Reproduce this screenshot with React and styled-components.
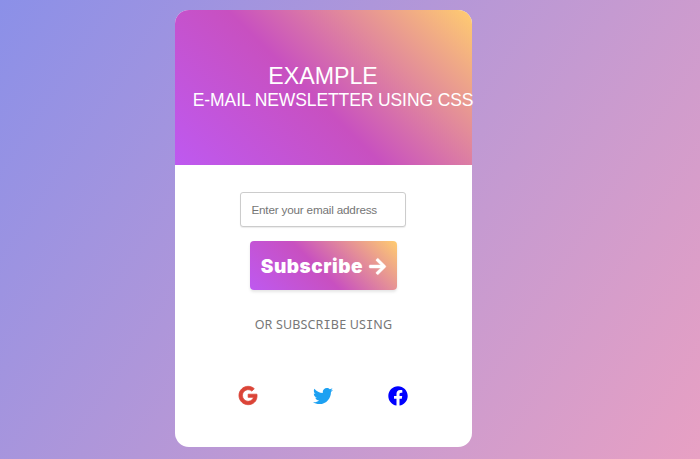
import React from "react";
import styled, { createGlobalStyle } from "styled-components";
import { FaArrowRight, FaFacebook, FaGoogle, FaTwitter } from "react-icons/fa";

const brandGradient = "linear-gradient(45deg, #be59f0 0%, #c850c0 46%, #ffcc70 100%)";

const GlobalStyle = createGlobalStyle`
  *, *::before, *::after { box-sizing: border-box; }
  body { margin: 0; font-family: "Liberation Sans", Arial, sans-serif; }
`;

const Page = styled.main`
  display: flex;
  height: 459px;
  padding: 9.5px 0 0 175.3px;
  overflow: hidden;
  background: linear-gradient(123deg, #8b90e8 0%, #e8a0c3 100%);
`;

const Card = styled.section`
  display: flex;
  flex-direction: column;
  width: 296.3px;
  height: 437.4px;
  border-radius: 14px;
  background: #fff;
`;

const Header = styled.header`
  height: 155.2px;
  padding: 53.5px 0 0 17.5px;
  border-radius: 14px 14px 0 0;
  background: ${brandGradient};
  color: #fff;
  white-space: nowrap;
`;

const Title = styled.h1`
  margin: 0 0 0 75.5px;
  font-size: 23.2px;
  line-height: 27px;
  font-weight: 400;
`;

const Subtitle = styled.h2`
  margin: 0;
  font-size: 17.5px;
  line-height: 21px;
  font-weight: 400;
  letter-spacing: -0.1px;
`;

const Form = styled.form`
  display: flex;
  flex-direction: column;
  align-items: center;
  padding-top: 27.3px;
`;

const EmailInput = styled.input`
  width: 166px;
  height: 35px;
  margin: 0;
  padding: 0 10px;
  border: 1px solid #ccc;
  border-radius: 3px;
  box-shadow: 0 1px 1px rgba(0, 0, 0, 0.08);
  font: 11.7px "Liberation Sans", Arial, sans-serif;
  letter-spacing: -0.18px;
  &::placeholder { color: #757575; opacity: 1; }
`;

const SubscribeButton = styled.button`
  display: flex;
  align-items: center;
  justify-content: center;
  gap: 6px;
  width: 147.5px;
  height: 49px;
  margin-top: 14px;
  padding: 2px 0 0;
  border: 0;
  border-radius: 4px;
  background: ${brandGradient};
  box-shadow: 0 2px 3px rgba(0, 0, 0, 0.1);
  color: #fff;
  font: 900 19px/1 Inter, sans-serif;
  letter-spacing: 0.55px;
  svg { width: 17px; height: 19px; stroke: #fff; stroke-width: 12px; overflow: visible; }
`;

const Divider = styled.p`
  margin: 26px 0 0;
  color: #777;
  text-align: center;
  font: 12.5px/17px "Noto Sans", sans-serif;
  letter-spacing: 0.15px;
`;

const SerifCapital = styled.span`
  font: 12px/1 "DejaVu Sans Mono", monospace;
`;

const SocialLinks = styled.nav`
  display: flex;
  justify-content: center;
  gap: 55px;
  margin-top: 53px;
`;

const SocialLink = styled.a`
  display: flex;
  color: ${({ $color }) => $color};
  svg {
    width: 20px;
    height: ${({ $size = 20 }) => $size}px;
    overflow: visible;
    stroke: currentColor;
    stroke-width: ${({ $stroke = 0 }) => $stroke}px;
  }
`;

export default function App() {
  return (
    <>
      <GlobalStyle />
      <Page>
        <Card>
          <Header>
            <Title>EXAMPLE</Title>
            <Subtitle>E-MAIL NEWSLETTER USING CSS</Subtitle>
          </Header>
          <Form>
            <EmailInput type="email" placeholder="Enter your email address" />
            <SubscribeButton type="button">
              Subscribe <FaArrowRight />
            </SubscribeButton>
          </Form>
          <Divider>
            OR SUBSCR<SerifCapital>I</SerifCapital>BE US<SerifCapital>I</SerifCapital>NG
          </Divider>
          <SocialLinks>
            <SocialLink $color="#db4437" $stroke={20} $size={19} aria-label="Google"><FaGoogle /></SocialLink>
            <SocialLink $color="#1da1f2" aria-label="Twitter"><FaTwitter /></SocialLink>
            <SocialLink $color="#0000ff" aria-label="Facebook"><FaFacebook /></SocialLink>
          </SocialLinks>
        </Card>
      </Page>
    </>
  );
}
